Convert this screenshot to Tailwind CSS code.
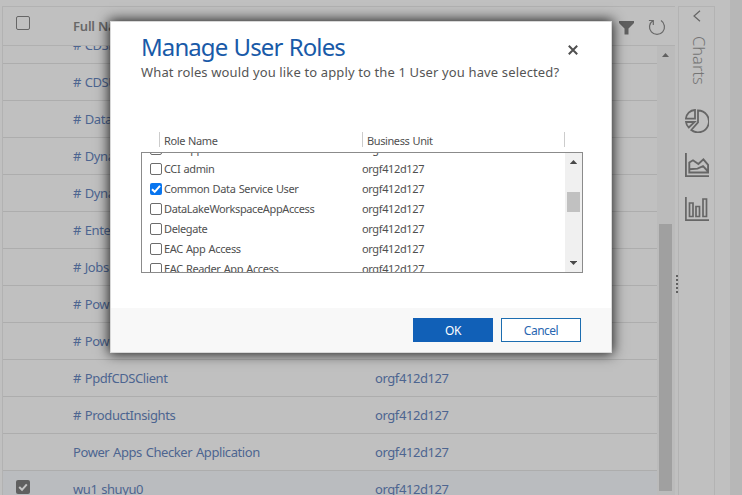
<!DOCTYPE html>
<html lang="en">
<head>
<meta charset="utf-8">
<title>Manage User Roles</title>
<script src="https://cdn.jsdelivr.net/npm/@tailwindcss/browser@4"></script>
</head>
<body class="relative h-[495px] w-[742px] overflow-hidden bg-[#c0c0c0] font-['Noto_Sans','Open_Sans',sans-serif] text-[#4a4a4a]">
<main class="flex h-[495px] pl-[2px]">
  <section class="mt-[6px] w-[673px] border-t border-l border-[#b2b2b2]">
    <header class="flex h-[39px] w-[672px] items-center border-b border-[#b0b0b0]">
      <span class="ml-[13px] h-[14px] w-[14px] -translate-y-[3px] rounded-[2px] border border-[#666]"></span>
      <span class="ml-[43px] w-[300px] translate-y-px text-[13px] font-semibold tracking-[-0.2px] text-[#686868]">Full Name</span>
      <svg class="ml-[246px] h-[14px] w-[15px] translate-y-[2px]" viewBox="0 0 15 14" fill="#606060"><path d="M0 0H15V2L9.500 7.500V13.500H5.500V7.500L0 2Z"/></svg>
      <svg class="ml-[14px] h-[18px] w-[18px] translate-y-px" viewBox="0 0 18 18" fill="none" stroke="#686868" stroke-width="1.200"><path d="M4.800 2.700A7.500 7.500 0 1 0 13 2.600M0.900 2.500H5.300V6.900"/></svg>
    </header>
    <div class="flex h-[449px] overflow-hidden">
      <div id="users" class="-mt-[19px] w-[654px] shrink-0 text-[13px] leading-[18px] tracking-[-0.42px] [word-spacing:0.8px] text-[#4d6590]"></div>
      <div class="relative w-[18px] bg-[#bbb]">
        <svg class="absolute left-[5px] top-[7px] h-[4px] w-[7px]" viewBox="0 0 7 4" fill="#606060"><path d="M3.500 0L7 4H0Z"/></svg>
        <div class="absolute left-[2px] top-[178px] h-[267px] w-[13px] bg-[#a0a0a0]"></div>
      </div>
    </div>
  </section>
  <div class="flex w-[3px] flex-col gap-[2px] pt-[275px]">
    <i class="h-[2px] w-[2px] shrink-0 translate-x-px bg-[#606060]"></i><i class="h-[2px] w-[2px] shrink-0 translate-x-px bg-[#606060]"></i><i class="h-[2px] w-[2px] shrink-0 translate-x-px bg-[#606060]"></i><i class="h-[2px] w-[2px] shrink-0 translate-x-px bg-[#606060]"></i><i class="h-[2px] w-[2px] shrink-0 translate-x-px bg-[#606060]"></i>
  </div>
  <aside class="mt-[6px] flex w-[37px] flex-col items-center border border-b-0 border-[#b3b3b3] text-[#747474]">
    <svg class="mt-[3px] h-[12px] w-[8px] shrink-0" viewBox="0 0 8 12" fill="none" stroke="#656565" stroke-width="1.200"><path d="M7 .7L1 6L7 11.300"/></svg>
    <span class="mt-[14px] h-[49px] translate-x-[2px] text-[16.500px] leading-[20px] font-light whitespace-nowrap [writing-mode:vertical-rl]">Charts</span>
    <svg class="mt-[24px] h-[24px] w-[24px] shrink-0" viewBox="0 0 24 24" fill="none" stroke="#666" stroke-width="1.800"><path d="M13 1.500A10.900 10.900 0 1 1 6.300 21L13 13.300ZM10 1V9.700H.9C1.300 5 5 1.200 10 1ZM1 13H9.600L3.800 18.500C2.200 17 1.200 15 1 13Z"/></svg>
    <svg class="mt-[20px] h-[24px] w-[24px] shrink-0" viewBox="0 0 24 24" fill="none" stroke="#666" stroke-width="1.900"><path d="M.9 0V23.100H24M4.300 19.500V9.500L8 7.300L13.400 11L18.400 6.300L23.100 12V19.500ZM4.300 16.300L12.500 15.600L18 13.200L23.100 18.500"/></svg>
    <svg class="mt-[20px] h-[24px] w-[24px] shrink-0" viewBox="0 0 24 24" fill="none" stroke="#666" stroke-width="1.700"><path d="M.9 0V23.100H24M4.500 6H8V19.500H4.500ZM11 9.500H14.500V19.500H11ZM18 2H21.500V19.500H18Z"/></svg>
  </aside>
  <div class="ml-[15px] flex-1 bg-[#b7b7b7]"></div>
</main>

<div role="dialog" class="absolute left-[110px] top-[21px] flex h-[332px] w-[502px] flex-col border border-[#d8d8d8] bg-white shadow-[0_0_12px_1px_rgba(0,0,0,0.85)]">
  <div class="flex h-[130px] justify-between pl-[30px] pr-[33px]">
    <div class="whitespace-nowrap pt-[8px]">
      <h1 class="text-[24px] leading-[33px] tracking-[-0.92px] [word-spacing:1px] text-[#195aa8]">Manage User Roles</h1>
      <p class="text-[13px] leading-[18px] tracking-[0.135px] text-[#555]">What roles would you like to apply to the 1 User you have selected?</p>
    </div>
    <svg class="mt-[23px] h-[10px] w-[10px]" viewBox="0 0 10 10" stroke="#505050" stroke-width="2"><path d="M.8.8L9.200 9.200M9.200.8L.8 9.200"/></svg>
  </div>
  <div class="ml-[30px] h-[156px] w-[442px]">
    <div class="ml-[18px] -mt-[20px] flex h-[20px] text-[11px] leading-[18px] tracking-[-0.4px] [word-spacing:0.7px] text-[#505050]">
      <span class="h-[15px] w-[203px] border-l border-[#ccc] pl-[4px]">Role Name</span>
      <span class="h-[15px] w-[202px] border-l border-[#ccc] pl-[4px]">Business Unit</span>
      <span class="h-[15px] border-l border-[#ccc]"></span>
    </div>
    <div class="flex h-[121px] justify-between overflow-hidden border border-[#8b8b8b]">
      <div id="roles" class="-mt-[14px] text-[11px] leading-[16px] tracking-[-0.37px] [word-spacing:0.7px] text-[#505050]"></div>
      <div class="relative w-[17px] bg-[#f0f0f0]">
        <svg class="absolute left-[5px] top-[7px] h-[4px] w-[7px]" viewBox="0 0 7 4" fill="#484848"><path d="M3.500 0L7.200 4H-.2Z"/></svg>
        <div class="absolute left-[2px] top-[39px] h-[20px] w-[13px] bg-[#c1c1c1]"></div>
        <svg class="absolute left-[5px] top-[108px] h-[4px] w-[7px]" viewBox="0 0 7 4" fill="#484848"><path d="M-.2 0H7.200L3.500 4Z"/></svg>
      </div>
    </div>
  </div>
  <footer class="flex flex-1 justify-end gap-[8px] bg-[#f8f8f8] pr-[30px] pt-[10px] text-[12px] leading-[24px]">
    <button class="h-[24px] w-[80px] border border-[#1160b7] bg-[#1160b7] tracking-[-0.3px] text-white">OK</button>
    <button class="h-[24px] w-[80px] border border-[#1c6db0] bg-white tracking-[-0.5px] text-[#2866b1]">Cancel</button>
  </footer>
</div>
<script>
  const users = ['# CDSFileStorage', '# CDSUserManagement', '# DataLakeStorage', '# Dynamics365', '# DynamicsInsights', '# EnterpriseSales', '# Jobs Service', '# PowerApps', '# PowerAutomate', '# PpdfCDSClient', '# ProductInsights', 'Power Apps Checker Application', 'wu1 shuyu0'];
  document.getElementById('users').innerHTML = users.map((name, i) => {
    const on = i === users.length - 1;
    const check = on ? '<svg class="ml-[13px] h-[14px] w-[14px] -translate-y-[2px] rounded-[2px] bg-[#606060]" viewBox="0 0 14 14" fill="none" stroke="#c4c4c4" stroke-width="2"><path d="M3.200 7L6 9.800L10.800 4.300"/></svg>' : '<span class="ml-[13px] w-[14px]"></span>';
    return `<div class="flex h-[37px] items-center border-b border-[#adadad] ${on ? 'bg-[#babcbf]' : ''}">${check}<span class="ml-[43px] w-[302px]">${name}</span><span>orgf412d127</span></div>`;
  }).join('');
  const roles = ['CCI App Access', 'CCI admin', 'Common Data Service User', 'DataLakeWorkspaceAppAccess', 'Delegate', 'EAC App Access', 'EAC Reader App Access'];
  document.getElementById('roles').innerHTML = roles.map((name, i) => {
    const check = i === 2
      ? '<svg class="mr-[2px] h-[12px] w-[12px] rounded-[2px] bg-[#0875ef]" viewBox="0 0 12 12" fill="none" stroke="white" stroke-width="2"><path d="M2 6.200L4.700 8.800L10 2.800"/></svg>'
      : '<span class="mr-[2px] h-[12px] w-[12px] rounded-[2px] border border-[#6c6c6c] bg-white"></span>';
    return `<div class="flex h-[20px] items-center pl-[8px]">${check}<span class="w-[198px]">${name}</span><span>orgf412d127</span></div>`;
  }).join('');
</script>
</body>
</html>
